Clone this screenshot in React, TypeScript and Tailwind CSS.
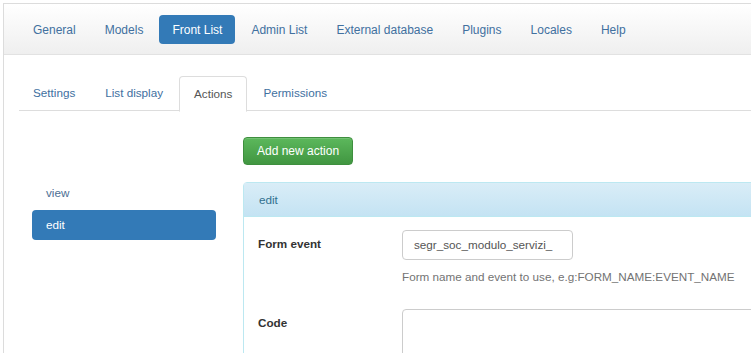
import React from 'react';

const topLinks = ['General', 'Models', 'Front List', 'Admin List', 'External database', 'Plugins', 'Locales', 'Help'];
const tabs = ['Settings', 'List display', 'Actions', 'Permissions'];

function App() {
  return (
    <div className="w-[751px] h-[353px] overflow-hidden bg-white font-['Liberation_Sans',Arial,sans-serif] text-[11.7px] text-[#333]">
      <div className="w-[1100px] ml-[3px] mt-[3px] border-l border-t border-[#dcdcdc] h-[400px]">
        {/* top navbar */}
        <div className="flex items-center gap-[3px] h-[51px] pl-[16px] pt-[1px] text-[12px] bg-gradient-to-b from-white to-[#efefef] border-b border-[#e2e2e2]">
          {topLinks.map((l) => (
            <div
              key={l}
              className={
                l === 'Front List'
                  ? 'h-[29px] px-[13px] flex items-center rounded-[4px] bg-[#337ab7] text-white'
                  : 'h-[29px] px-[13px] flex items-center text-[#41709f]'
              }
            >
              {l}
            </div>
          ))}
        </div>

        <div className="pl-[15px] pt-[21px]">
          {/* tabs */}
          <div className="flex h-[35px] border-b border-[#ddd]">
            {tabs.map((t) => (
              <div
                key={t}
                className={
                  t === 'Actions'
                    ? 'mr-[2px] px-[14px] flex items-center border border-[#ddd] border-b-white rounded-t-[4px] bg-white text-[#555] h-[36px]'
                    : 'mr-[2px] px-[14px] flex items-center text-[#41709f]'
                }
              >
                {t}
              </div>
            ))}
          </div>

          <div className="flex">
            {/* left list */}
            <div className="w-[184px] ml-[13px] mt-[67px] flex flex-col gap-[2px]">
              <div className="h-[30px] px-[14px] flex items-center text-[#4d6f94]">view</div>
              <div className="h-[30px] px-[14px] flex items-center rounded-[4px] bg-[#337ab7] text-white">edit</div>
            </div>

            {/* right column */}
            <div className="ml-[27px] pt-[26px] flex-1">
              <button className="block h-[28px] px-[13px] rounded-[4px] border border-[#3e8f3e] bg-gradient-to-b from-[#5cb85c] to-[#419641] text-white text-[12px] shadow-[inset_0_1px_0_rgba(255,255,255,0.15)]">
                Add new action
              </button>

              <div className="mt-[17px] border border-[#bce8f1] rounded-[4px]">
                <div className="h-[34px] px-[15px] flex items-center bg-gradient-to-b from-[#d9edf7] to-[#c4e3f3] border-b border-[#bce8f1] text-[#31708f]">
                  edit
                </div>
                <div className="px-[14px] pt-[13px]">
                  <div className="flex">
                    <div className="w-[144px] h-[28px] flex items-center font-bold">Form event</div>
                    <div>
                      <div className="w-[171px] h-[30px] px-[11px] flex items-center border border-[#ccc] rounded-[4px] text-[#555] overflow-hidden whitespace-nowrap">
                        segr_soc_modulo_servizi_
                      </div>
                      <div className="mt-[8px] text-[#737373]">Form name and event to use, e.g:FORM_NAME:EVENT_NAME</div>
                    </div>
                  </div>
                  <div className="flex mt-[23px]">
                    <div className="w-[144px] h-[28px] flex items-center font-bold">Code</div>
                    <div className="w-[500px] h-[80px] border border-[#ccc] rounded-[4px]" />
                  </div>
                </div>
              </div>
            </div>
          </div>
        </div>
      </div>
    </div>
  );
}

export default App;
